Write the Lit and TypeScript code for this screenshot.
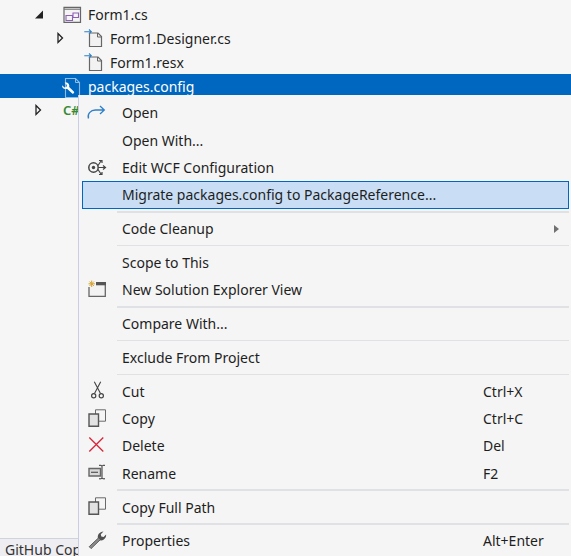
import { LitElement, html, css, svg } from "lit";
import { customElement } from "lit/decorators.js";

const fileIcon = svg`<svg width="20" height="20" viewBox="0 0 20 20"><path d="M5.500 5h8.500l3.500 3.500v10h-12z" fill="#f2f2f2" stroke="#666" stroke-width="1.200"/><path d="M13.500 5v4h4" fill="none" stroke="#666"/><path d="M.3 3.700h7M5 1.500l2.300 2.200L5 5.900" fill="none" stroke="#2f80c8" stroke-width="1.100"/></svg>`;

const copyIcon = svg`<svg width="20" height="20" viewBox="0 0 20 20"><path d="M9.500 .8h10v11.400h-10z" fill="#f5f5f5" stroke="#6a6a6a"/><path d="M3 5h9.500v12.200H3z" fill="#e2e2e2" stroke="#555" stroke-width="1.400"/></svg>`;

const icons: Record<string, unknown> = {
  open: svg`<svg width="20" height="20" viewBox="0 0 20 20"><path d="M2.500 15.500c-1.500-4.500 2-8.500 7-8.500h8.500M14 3l4.300 4-4.300 4" fill="none" stroke="#2f80c8" stroke-width="1.300"/></svg>`,
  wcf: svg`<svg width="20" height="20" viewBox="0 0 20 20"><circle cx="7.500" cy="9.500" r="4.700" fill="none" stroke="#444" stroke-width="1.500"/><circle cx="7.500" cy="9.500" r="1.700" fill="#444"/><path d="M12 7.500l3-4.500M13 2.500h3l0 2.500M12.500 9.500h7M17 7.500l2.500 2-2.500 2M12 11.500l3 4.500M13 16.500h3v-2.500" fill="none" stroke="#444" stroke-width="1.200"/></svg>`,
  view: svg`<svg width="20" height="20" viewBox="0 0 20 20"><path d="M3 7v9.300h16.300V3" fill="#f3f3f3" stroke="#666" stroke-width="1.300"/><path d="M10 2h10v3.300H10z" fill="#555"/><path d="M2.500 3.800h6.400M5.700 .6V7M3.500 1.600l4.400 4.400M7.900 1.600L3.500 6" stroke="#d6a32c" stroke-width="1"/></svg>`,
  cut: svg`<svg width="20" height="20" viewBox="0 0 20 20"><path d="M8.300 .7L14.500 12.500M14.700 .7L8.500 12.500" fill="none" stroke="#444" stroke-width="1.100"/><circle cx="7.700" cy="14.700" r="2.100" fill="none" stroke="#444" stroke-width="1.200"/><circle cx="15.300" cy="14.700" r="2.100" fill="none" stroke="#444" stroke-width="1.200"/></svg>`,
  copy: copyIcon,
  del: svg`<svg width="20" height="20" viewBox="0 0 20 20"><path d="M3.300 1.500l14 14M17.300 1.500l-14 14" stroke="#d8273c" stroke-width="1.300"/></svg>`,
  rename: svg`<svg width="20" height="20" viewBox="0 0 20 20"><path d="M3 5.500h11.500v7.500H3z" fill="#d8d8d8" stroke="#666" stroke-width="1.400"/><path d="M5 9.300h7" stroke="#555" stroke-width="1.200"/><path d="M13 2.300h2.200l.8.800.8-.8H19M16 3v12M13 15.800h2.200l.8-.8.800.8H19" fill="none" stroke="#333" stroke-width="1"/></svg>`,
  wrench: svg`<svg width="20" height="20" viewBox="0 0 20 20"><path d="M12 7.500C11 4 13.500 .8 17.500 .5l-2.700 2.700.5 2.300 2.300.5 2.500-2.500c.4 3.600-3 6.700-6 5.700z" fill="#505050"/><path d="M12.600 6.800L3.200 15.700l1.900 1.900 9.300-9z" fill="#8a8a8a" stroke="#505050" stroke-width=".9"/></svg>`,
};

type Item = { t: string; icon?: string; key?: string; sub?: boolean; hot?: boolean };
const groups: Item[][] = [
  [
    { t: "Open", icon: "open" },
    { t: "Open With..." },
    { t: "Edit WCF Configuration", icon: "wcf" },
    { t: "Migrate packages.config to PackageReference...", hot: true },
  ],
  [{ t: "Code Cleanup", sub: true }],
  [{ t: "Scope to This" }, { t: "New Solution Explorer View", icon: "view" }],
  [{ t: "Compare With..." }],
  [{ t: "Exclude From Project" }],
  [
    { t: "Cut", icon: "cut", key: "Ctrl+X" },
    { t: "Copy", icon: "copy", key: "Ctrl+C" },
    { t: "Delete", icon: "del", key: "Del" },
    { t: "Rename", icon: "rename", key: "F2" },
  ],
  [{ t: "Copy Full Path", icon: "copy" }],
  [{ t: "Properties", icon: "wrench", key: "Alt+Enter" }],
];

@customElement("app-root")
export class AppRoot extends LitElement {
  static styles = css`
    :host {
      display: flex;
      flex-direction: column;
      position: relative;
      width: 571px;
      height: 556px;
      overflow: hidden;
      background: #f6f6f6;
      font-family: "Noto Sans", "Open Sans", sans-serif;
      font-size: 14px;
      color: #1e1e1e;
    }
    .tree {
      flex: 1;
      padding-top: 2px;
    }
    .node {
      height: 24px;
      display: flex;
      align-items: center;
      white-space: nowrap;
    }
    .selected {
      background: #0067c0;
      color: #fff;
      padding-left: 61px;
    }
    .twist {
      width: 8px;
      height: 12px;
      flex: none;
    }
    .slot {
      height: 20px;
      flex: none;
    }
    .s-form { width: 25px; margin-left: 20px; }
    .s-file { width: 26px; }
    .s-gap { margin-left: 19px; }
    .s-pkg { width: 27px; }
    .s-cs {
      width: 30px;
      margin-left: 20px;
      font-size: 13px;
      font-weight: 600;
      color: #388a34;
      line-height: 20px;
    }
    .l1 { padding-left: 35px; }
    .l2 { padding-left: 57px; }
    .l3 { padding-left: 84px; }
    .status {
      height: 17px;
      border-top: 1px solid #cfd3dd;
      background: #eeeef2;
      padding-left: 5px;
      font-size: 14px;
      line-height: 21px;
      color: #333;
      overflow: hidden;
    }
    .menu {
      position: absolute;
      left: 78px;
      top: 95px;
      right: 0;
      bottom: 0;
      background: #f5f5f5;
      border-left: 1px solid #c9cfe3;
      padding: 4.350px 2px 0 3px;
      box-sizing: border-box;
    }
    .row {
      height: 27.300px;
      display: flex;
      align-items: center;
      box-sizing: border-box;
      position: relative;
      white-space: nowrap;
    }
    .row.hot {
      background: #c9def5;
      box-shadow: inset 0 0 0 1px #0067c0;
    }
    .gutter {
      width: 40px;
      padding-left: 4px;
      box-sizing: border-box;
      flex: none;
      display: flex;
      align-items: center;
      height: 20px;
    }
    .text { flex: 1; }
    .key {
      width: 86px;
      flex: none;
    }
    .arrow {
      position: absolute;
      right: 10px;
      top: 10px;
      width: 0;
      height: 0;
      border-left: 5px solid #707070;
      border-top: 4px solid transparent;
      border-bottom: 4px solid transparent;
    }
    .sep {
      height: 1.500px;
      margin: 2.500px 0 2.550px 35px;
      background: #e0e1e4;
    }
    svg { display: block; overflow: visible; }
  `;

  private item(i: Item) {
    return html`<div class="row ${i.hot ? "hot" : ""}">
      <span class="gutter">${i.icon ? icons[i.icon] : ""}</span>
      <span class="text">${i.t}</span>
      ${i.key ? html`<span class="key">${i.key}</span>` : ""}
      ${i.sub ? html`<span class="arrow"></span>` : ""}
    </div>`;
  }

  render() {
    const closed = svg`<svg class="twist" viewBox="0 0 8 12"><path d="M1 1.500l4.500 4.500L1 10.500z" fill="none" stroke="#222" stroke-width="1.300"/></svg>`;
    return html`
      <div class="tree">
        <div class="node l1">
          <svg class="twist" viewBox="0 0 8 12"><path d="M0 10.500L8 2.500v8z" fill="#222"/></svg>
          <span class="slot s-form"><svg width="20" height="20" viewBox="0 0 20 20"><path d="M1 3.300h16.500v15H1z" fill="#f4f4f4" stroke="#666" stroke-width="1.200"/><path d="M1 5.200h16.500" stroke="#777" stroke-width="1.200"/><path d="M3 11.500h6.500v5H3zM10 9h5.500v4.500H10z" fill="none" stroke="#8d5fb5" stroke-width="1.100"/></svg></span>
          <span>Form1.cs</span>
        </div>
        <div class="node l2">
          ${closed}
          <span class="slot s-file s-gap">${fileIcon}</span>
          <span>Form1.Designer.cs</span>
        </div>
        <div class="node l3">
          <span class="slot s-file">${fileIcon}</span>
          <span>Form1.resx</span>
        </div>
        <div class="node selected">
          <span class="slot s-pkg"><svg width="20" height="20" viewBox="0 0 20 20"><path d="M4.500 2.500h10l4 4v15h-14z" fill="#0067c0" stroke="#8fbce6" stroke-width="1.100"/><path d="M14.500 2.500v4h4" fill="none" stroke="#8fbce6"/><path d="M1.200 9.200l2.200 2.200 2-.5.500-2-2.200-2.200c2.800-.8 5.200 1.400 4.500 4.300l4.800 4.800c.8.800-.9 2.700-1.800 1.800L6 12.800C3.300 13.800.6 12 1.200 9.200z" fill="#fff"/></svg></span>
          <span>packages.config</span>
        </div>
        <div class="node l1">
          ${closed}
          <span class="slot s-cs">C#</span>
        </div>
      </div>
      <div class="status">GitHub Copilot</div>
      <div class="menu">
        ${groups.map(
          (g, n) => html`${n ? html`<div class="sep"></div>` : ""}${g.map((i) => this.item(i))}`
        )}
      </div>
    `;
  }
}
